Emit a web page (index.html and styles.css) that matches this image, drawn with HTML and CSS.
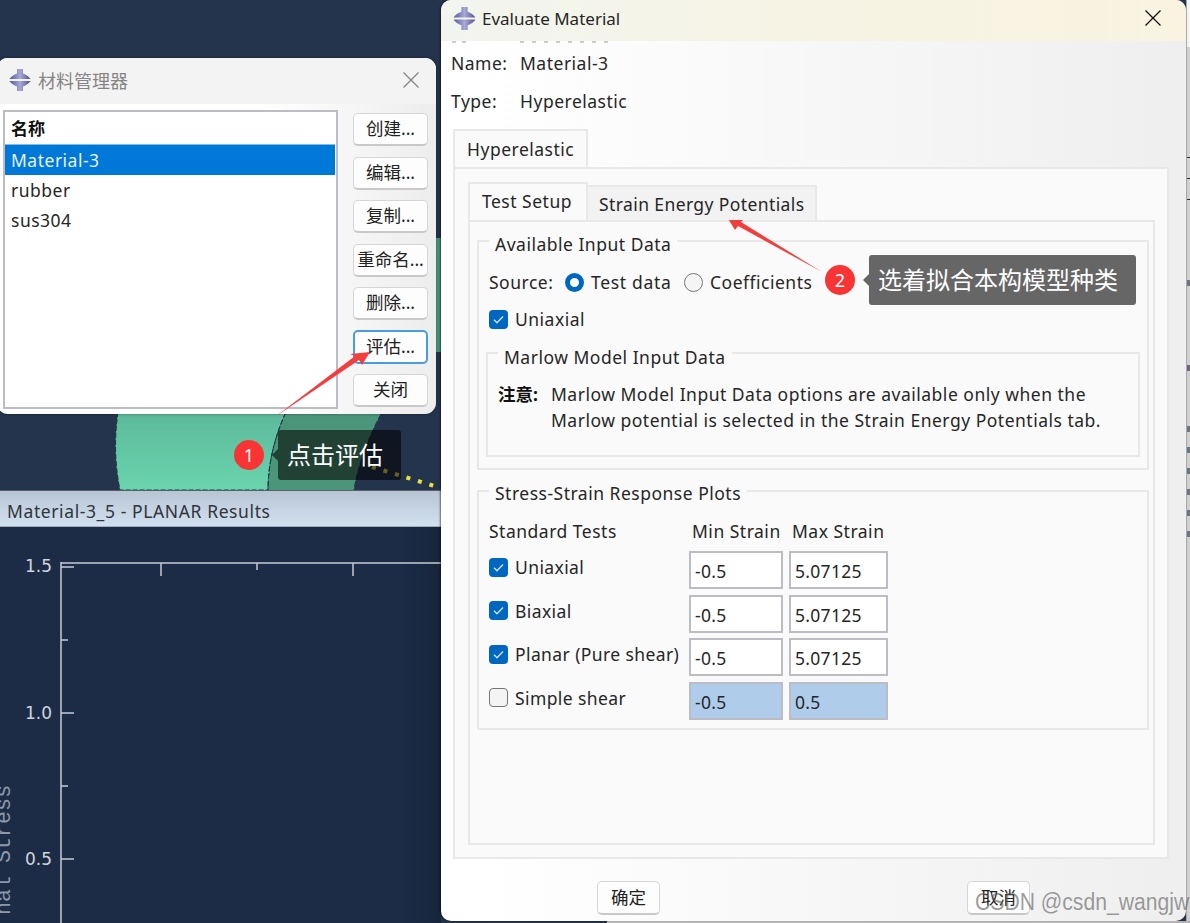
FILE: index.html
```html
<!DOCTYPE html>
<html lang="zh">
<head>
<meta charset="utf-8">
<title>Evaluate Material</title>
<link rel="stylesheet" href="styles.css">
</head>
<body>
<svg class="defs" width="0" height="0" aria-hidden="true">
  <defs>
    <linearGradient id="logoFill" x1="0" x2="1" y1="0" y2="0">
      <stop offset="0" stop-color="#56569c"/>
      <stop offset=".5" stop-color="#a9a9d6"/>
      <stop offset="1" stop-color="#4e4e94"/>
    </linearGradient>
    <symbol id="logo" viewBox="0 0 22 22">
      <path fill="url(#logoFill)" d="M8 0h6v4.500C17 5.500 20 7.500 21.500 10H.5C2 7.500 5 5.500 8 4.500z"/>
      <path fill="url(#logoFill)" d="M.5 12h21C20 14.500 17 16.500 14 17.500V22H8v-4.500C5 16.500 2 14.500.5 12z"/>
    </symbol>
    <symbol id="tick" viewBox="0 0 19 19">
      <path fill="none" stroke="#cfe2f5" stroke-width="1.4" d="M5 9.800l3 3 6-6.300"/>
    </symbol>
  </defs>
</svg>

<div class="desktop">
  <svg class="model" width="441" height="490" viewBox="0 0 441 490" aria-hidden="true">
    <defs>
      <linearGradient id="ringLight" x1="0" x2="0" y1="0" y2="1">
        <stop offset="0" stop-color="#5cb99a"/>
        <stop offset="1" stop-color="#6ad4ae"/>
      </linearGradient>
    </defs>
    <path class="ring-dark" d="M280 414C272 440 268 465 268 490H354C358 465 368 438 381 414Z"/>
    <path class="ring-dark" d="M430 238H441V352H430Z"/>
    <path fill="url(#ringLight)" stroke="#1d3640" stroke-dasharray="5 2" d="M118 412C114 440 115 465 120 490H268C268 465 274 438 286 412Z"/>
    <path class="ring-edge" d="M286 412C274 438 268 465 268 490M381 414C368 438 358 465 354 490"/>
    <path class="dots" d="M372 467L441 488"/>
  </svg>

  <section class="plot-window">
    <header class="plot-title">Material-3_5 - PLANAR Results</header>
    <svg class="plot" width="441" height="396" viewBox="0 0 441 396">
      <path class="axis" d="M61 36H441M61 35V396"/>
      <path class="axis" d="M61 40H74M61 113H68M61 186H74M61 259H68M61 332H74M161 36V49M257 36V43M353 36V49"/>
      <text class="tick-label" x="25" y="45">1.5</text>
      <text class="tick-label" x="25" y="192">1.0</text>
      <text class="tick-label" x="25" y="338">0.5</text>
      <text class="axis-title" transform="translate(10 396) rotate(-90)" x="8" y="0">nal Stress</text>
    </svg>
  </section>

  <section class="window manager">
    <header class="manager-title">
      <svg class="logo" width="22" height="22"><use href="#logo"/></svg>
      <span class="manager-name">材料管理器</span>
      <svg class="close" width="16" height="16" viewBox="0 0 16 16"><path d="M.5.5l15 15M15.500.5l-15 15"/></svg>
    </header>
    <div class="manager-body">
      <div class="list">
        <div class="list-head">名称</div>
        <div class="list-row selected">Material-3</div>
        <div class="list-row">rubber</div>
        <div class="list-row">sus304</div>
      </div>
      <div class="actions">
        <button class="btn">创建...</button>
        <button class="btn">编辑...</button>
        <button class="btn">复制...</button>
        <button class="btn">重命名...</button>
        <button class="btn">删除...</button>
        <button class="btn focus">评估...</button>
        <button class="btn">关闭</button>
      </div>
    </div>
  </section>

  <section class="window evaluate">
    <header class="eval-title">
      <svg class="logo" width="23" height="23"><use href="#logo"/></svg>
      <span class="eval-name">Evaluate Material</span>
      <svg class="close dark" width="16" height="16" viewBox="0 0 16 16"><path d="M.5.5l15 15M15.500.5l-15 15"/></svg>
    </header>
    <div class="eval-body">
      <div class="info-row"><span class="info-key">Name:</span><span>Material-3</span></div>
      <div class="info-row"><span class="info-key">Type:</span><span>Hyperelastic</span></div>

      <div class="tab-bar outer-tabs"><div class="tab active">Hyperelastic</div></div>
      <div class="tab-panel outer-panel">
        <div class="tab-bar inner-tabs">
          <div class="tab active">Test Setup</div>
          <div class="tab idle">Strain Energy Potentials</div>
        </div>
        <div class="tab-panel inner-panel">
          <div class="group input-group">
            <div class="legend">Available Input Data</div>
            <div class="source-row">
              <span class="source-key">Source:</span>
              <span class="radio on"></span><span class="radio-text">Test data</span>
              <span class="radio"></span><span>Coefficients</span>
            </div>
            <label class="check-row"><span class="check on"><svg width="19" height="19"><use href="#tick"/></svg></span>Uniaxial</label>
            <div class="group marlow">
              <div class="legend">Marlow Model Input Data</div>
              <div class="note">
                <strong>注意:</strong>
                <p>Marlow Model Input Data options are available only when the<br>Marlow potential is selected in the Strain Energy Potentials tab.</p>
              </div>
            </div>
          </div>
          <div class="group plots-group">
            <div class="legend">Stress-Strain Response Plots</div>
            <div class="strain-grid">
              <div class="grid-head">Standard Tests</div>
              <div class="grid-head col">Min Strain</div>
              <div class="grid-head col">Max Strain</div>

              <label class="check-row"><span class="check on"><svg width="19" height="19"><use href="#tick"/></svg></span>Uniaxial</label>
              <div class="field">-0.5</div><div class="field">5.07125</div>

              <label class="check-row"><span class="check on"><svg width="19" height="19"><use href="#tick"/></svg></span>Biaxial</label>
              <div class="field">-0.5</div><div class="field">5.07125</div>

              <label class="check-row"><span class="check on"><svg width="19" height="19"><use href="#tick"/></svg></span>Planar (Pure shear)</label>
              <div class="field">-0.5</div><div class="field">5.07125</div>

              <label class="check-row"><span class="check"></span>Simple shear</label>
              <div class="field off">-0.5</div><div class="field off">0.5</div>
            </div>
          </div>
        </div>
      </div>
      <div class="footer">
        <button class="btn wide">确定</button>
        <button class="btn wide">取消</button>
      </div>
    </div>
  </section>

  <div class="side-strip">
    <span class="mark m1"></span><span class="mark m2"></span><span class="mark m3"></span>
    <span class="blob b1"></span><span class="blob b2"></span><span class="blob b3"></span><span class="blob b4"></span>
    <span class="blob b5"></span><span class="blob b6"></span><span class="blob b7"></span><span class="blob b8"></span>
  </div>
  <div class="bottom-strip"></div>

  <svg class="arrows" width="1190" height="923" viewBox="0 0 1190 923" aria-hidden="true">
    <path d="M275 417L355 356L350 354L370 352L362 365L359 360Z"/>
    <path d="M822 272L741 222L745 218L727 217L735 230L738 226Z"/>
  </svg>

  <div class="callout c1">
    <span class="badge">1</span>
    <span class="bubble">点击评估</span>
  </div>
  <div class="callout c2">
    <span class="badge">2</span>
    <span class="bubble grey">选着拟合本构模型种类</span>
  </div>

  <div class="watermark">CSDN @csdn_wangjw</div>
</div>
</body>
</html>
```
FILE: styles.css
```css
* { box-sizing: border-box; }
html, body { margin: 0; height: 100%; }
body {
  overflow: hidden;
  background: #24344d;
  color: #262626;
  font-family: "Noto Sans", "Noto Sans CJK SC", sans-serif;
  font-size: 17.500px;
  letter-spacing: .5px;
}
.defs { position: absolute; }
.desktop { position: relative; width: 1190px; height: 923px; overflow: hidden; }
.model { position: absolute; left: 0; top: 0; }
.ring-dark { fill: #4b957a; }
.ring-edge { fill: none; stroke: #1d3640; stroke-dasharray: 6 2; }
.dots { fill: none; stroke: #e8e23a; stroke-width: 4; stroke-dasharray: 4 8; }

/* plot window */
.plot-window { position: absolute; left: 0; top: 490px; width: 441px; height: 433px; background: linear-gradient(90deg, #1c2c47 90%, #17253c); }
.plot-title {
  height: 37px;
  padding-left: 7px;
  line-height: 40px;
  letter-spacing: .6px;
  color: #30343c;
  border-top: 1px solid #5b6068;
  border-bottom: 1px solid #a3adba;
  background: linear-gradient(180deg, #b7c4d4, #d2e1ef);
}
.plot { display: block; }
.axis { fill: none; stroke: #c4cad2; stroke-width: 1.500; }
.tick-label { fill: #d0d5db; font-family: "DejaVu Sans", sans-serif; font-size: 17px; letter-spacing: 0; }
.axis-title { fill: #8d98a8; font-family: "Liberation Mono", monospace; font-size: 21.700px; letter-spacing: 0; }

/* windows */
.window { position: absolute; }
.manager {
  left: -3px; top: 58px; width: 439px; height: 356px;
  background: linear-gradient(90deg, #fff 60%, #ededed);
  border-radius: 11px;
  box-shadow: 0 0 3px rgba(0, 0, 0, .4);
}
.manager-title {
  display: flex; align-items: center;
  height: 46px; padding: 0 17px 2px 12px;
  background: #f3f3f3;
  border-radius: 11px 11px 0 0;
}
.manager-name { margin-left: 7px; flex: 1; font-size: 18px; letter-spacing: 0; color: #858585; }
.close path { fill: none; stroke: #858585; stroke-width: 1.300; }
.close.dark path { stroke: #111; }
.manager-body { display: flex; padding: 6px 8px 0 6px; }
.list {
  width: 335px; height: 299px;
  background: #fff;
  border: 2px solid #bcbcc4;
}
.list-head { height: 32px; padding-left: 6px; line-height: 34px; font-weight: 700; font-size: 17px; letter-spacing: 0; color: #111; }
.list-row { height: 30px; padding-left: 6px; margin-right: 1px; line-height: 30px; }
.list-row.selected { height: 31px; background: #0078d7; color: #e6f2fb; border-top: 1px solid #7fbbeb; }
.actions { display: flex; flex-direction: column; gap: 10.500px; margin: 3px 0 0 15px; width: 75px; }
.btn {
  height: 33px;
  padding: 0;
  font: inherit;
  font-size: 17.500px;
  line-height: 1;
  letter-spacing: 0;
  color: #222;
  background: #fdfdfd;
  border: 1px solid #d6d6d6;
  border-bottom: 2px solid #c8c8c8;
  border-radius: 5px;
}
.btn.focus { height: 34px; margin-top: -1px; border: 2px solid #4a9ce0; }

.evaluate {
  left: 441px; top: 0; width: 745px; height: 921px;
  background: linear-gradient(90deg, #fff 5%, #efefef 98%);
  border-radius: 10px;
  box-shadow: -1px 0 2px rgba(0, 0, 0, .5);
}
.eval-title {
  display: flex; align-items: center;
  height: 41px; padding: 0 25px 5px 12px;
  background: linear-gradient(90deg, #f2f5ee, #f6f3e4 50%, #f9f3e0);
  border-radius: 10px 10px 0 0;
}
.eval-name { margin-left: 6px; flex: 1; font-size: 17px; letter-spacing: 0; }
.eval-body { position: relative; padding: 3px 17px 0 10px; }
.eval-body::before {
  content: "";
  position: absolute; left: 11px; top: 0;
  width: 156px; height: 2px;
  background:
    repeating-linear-gradient(90deg, #ccc 0 4px, transparent 4px 12px) 68px 0 / 88px 2px no-repeat,
    repeating-linear-gradient(90deg, #ccc 0 4px, transparent 4px 10px) 0 0 / 14px 2px no-repeat;
}
.info-row { display: flex; height: 38px; align-items: center; }
.info-key { width: 69px; }
.tab-bar { display: flex; position: relative; z-index: 1; }
.outer-tabs { margin: 9px 0 0 2px; height: 38px; }
.tab { padding: 0 12px; line-height: 38px; white-space: nowrap; }
.tab.active { background: #fafafa; border: 2px solid #e8e8e8; border-bottom: 0; }
.outer-tabs .tab { width: 135px; line-height: 37px; }
.tab-panel { background: #fafafa; border: 2px solid #e8e8e8; }
.outer-panel { margin-left: 2px; height: 692px; padding: 13px 12px 0 13px; }
.inner-tabs { height: 38px; align-items: flex-end; }
.inner-tabs .tab.active { width: 120px; height: 38px; line-height: 35px; }
.inner-tabs .tab.idle { width: 229px; height: 35px; padding: 0 11px; line-height: 35px; letter-spacing: .4px; background: #f2f2f2; border: 2px solid #e8e8e8; border-width: 2px 2px 0 0; }
.inner-panel { height: 625px; padding: 18px 4px 0 7px; }

.group { border: 2px solid #e8e8e8; padding: 0 7px 0 10px; }
.legend { width: fit-content; padding: 0 6px; line-height: 20px; background: #fafafa; }
.input-group { height: 230px; }
.input-group > .legend { margin-top: -8px; }
.source-row { display: flex; align-items: center; height: 28px; margin-top: 14px; }
.source-key { width: 76px; }
.radio { width: 19px; height: 19px; border-radius: 50%; margin-right: 7px; background: #f5f5f5; border: 1.500px solid #757575; }
.radio.on { background: #fff; border: 5px solid #0067c0; }
.radio-text { width: 93px; letter-spacing: .7px; }
.check-row { display: flex; align-items: center; gap: 7px; }
.input-group > .check-row { height: 28px; margin-top: 9px; }
.check { width: 19px; height: 19px; border-radius: 4px; background: #f4f4f4; border: 1.500px solid #757575; flex: none; }
.check.on { background: #0067c0; border: 0; }
.check svg { display: block; }
.marlow { height: 105px; margin: 19px 0 0 -3px; padding-right: 0; }
.marlow > .legend { margin-top: -7px; }
.note { display: flex; margin-top: 14px; line-height: 26px; }
.note strong { width: 53px; flex: none; letter-spacing: 0; color: #111; }
.note p { margin: 0; white-space: nowrap; }
.plots-group { height: 240px; margin-top: 20px; }
.plots-group > .legend { margin-top: -9px; }
.strain-grid {
  display: grid;
  grid-template-columns: 194px 94px 99px;
  grid-template-rows: 24.500px repeat(4, 38px);
  column-gap: 6px;
  row-gap: 5.500px;
  margin-top: 18px;
}
.grid-head { line-height: 20px; }
.grid-head.col { padding-left: 3px; white-space: nowrap; }
.strain-grid .check-row { padding-bottom: 6px; white-space: nowrap; letter-spacing: .4px; }
.field {
  padding-left: 4px;
  line-height: 36px;
  background: #fff;
  border: 2px solid #bcbcc4;
  letter-spacing: .3px;
}
.field.off { background: #afcdeb; }
.footer { display: flex; gap: 307px; padding-left: 146px; margin-top: 22px; }
.btn.wide { width: 63px; height: 34px; }

/* screen edges behind the dialog */
.side-strip { position: absolute; left: 1186px; top: 0; width: 4px; height: 923px; background: linear-gradient(180deg, #f4f4f4 47px, #d0d0d0 47px); border-left: 1px solid #a8a8a8; }
.bottom-strip { position: absolute; left: 607px; top: 921px; width: 583px; height: 2px; background: #b4b4b4; }
.mark, .blob { position: absolute; left: 0; width: 4px; }
.mark { height: 1px; background: #333; }
.m1 { top: 157px; } .m2 { top: 178px; } .m3 { top: 199px; }
.blob { height: 6px; background: #6b7684; }
.b1 { top: 280px; } .b2 { top: 365px; background: #6e6480; } .b3 { top: 426px; } .b4 { top: 447px; }
.b5 { top: 468px; } .b6 { top: 489px; } .b7 { top: 510px; } .b8 { top: 531px; }

/* annotations */
.arrows { position: absolute; left: 0; top: 0; }
.arrows path { fill: #f33e3e; }
.callout { position: absolute; display: flex; align-items: center; height: 50px; }
.c1 { left: 234px; top: 430px; }
.c2 { left: 825px; top: 255px; }
.badge {
  width: 30px; height: 30px; margin-right: 14px;
  border-radius: 50%;
  background: #f83434;
  color: #fff;
  text-align: center;
  line-height: 30px;
  font-size: 18px;
  letter-spacing: 0;
}
.bubble {
  position: relative;
  height: 50px; padding: 0 18px 0 9px;
  line-height: 50px;
  font-size: 24px;
  letter-spacing: 0;
  color: #fff;
  background: rgba(0, 0, 0, .56);
  border-radius: 3px;
  white-space: nowrap;
}
.bubble::before {
  content: "";
  position: absolute; left: -6px; top: 19px;
  border: solid transparent;
  border-width: 6px 6px 6px 0;
  border-right-color: rgba(0, 0, 0, .56);
}
.bubble.grey { background: #666; }
.bubble.grey::before { border-right-color: #666; }
.watermark {
  position: absolute; left: 975px; top: 888px;
  font-family: "Liberation Sans", sans-serif;
  font-size: 23.500px;
  line-height: 28px;
  letter-spacing: 0;
  color: rgba(90, 90, 90, .6);
  white-space: nowrap;
  transform: scaleX(.9);
  transform-origin: left center;
}
```
